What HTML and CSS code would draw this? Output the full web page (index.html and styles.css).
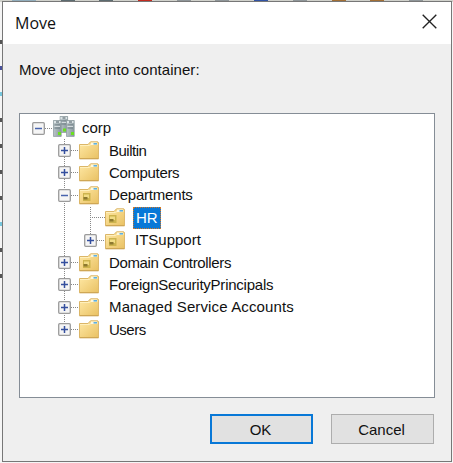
FILE: index.html
```html
<!DOCTYPE html>
<html lang="en">
<head>
<meta charset="utf-8">
<title>Move</title>
<link rel="stylesheet" href="styles.css">
</head>
<body>
<svg width="0" height="0" class="defs">
  <defs>
    <linearGradient id="gold" x1="0" y1="0" x2="1" y2="1"><stop offset="0" stop-color="#ffe9a6"/><stop offset="1" stop-color="#e9c163"/></linearGradient>
    <linearGradient id="steel" x1="0" y1="0" x2="1" y2="0"><stop offset="0" stop-color="#bac5c9"/><stop offset="1" stop-color="#87959b"/></linearGradient>
    <symbol id="folder" viewBox="0 0 20 19">
      <path d="M.5 3.5H9L11.5.8h7.3l.8 1V17.5H.5z" fill="url(#gold)" stroke="#dbb668"/>
      <path d="M1 4.5h9.5l2-1.5H19" fill="none" stroke="#fff0bd"/>
      <path d="M12 1.5h6v2.5h-6z" fill="#fff8de"/><path d="M14.5 2h3.5v1.6h-3.5z" fill="#5eb0df"/>
      <path d="M.5 17.8h19" stroke="#cba14d"/>
    </symbol>
    <symbol id="unit" viewBox="0 0 20 19">
      <use href="#folder" width="20" height="19"/>
      <path d="M4 7h7.5v8H4z" fill="#cdb44e"/>
      <path d="M5 8.5h5v3.5H5z" fill="#f1dc85"/><path d="M4.5 11h4v2.5h-4z" fill="#8d792f"/>
    </symbol>
    <symbol id="tower" viewBox="0 0 9 17">
      <path d="M.4.4h7.8v16H.4z" fill="url(#steel)" stroke="#8b999e" stroke-width=".8"/>
      <path d="M1 1h6.6v2.2H1z" fill="#dce4e6"/><path d="M3 2h3" stroke="#46565e"/><path d="M1.5 5h5.5M1.5 8h5.5" stroke="#6c7c83"/>
      <path d="M1.5 6.3h5.5" stroke="#e0e7e9"/>
    </symbol>
    <symbol id="domain" viewBox="0 0 22 22">
      <use href="#tower" x="6.5" y="0" width="9" height="17"/>
      <use href="#tower" x="0" y="4" width="9" height="17"/>
      <use href="#tower" x="13" y="4" width="9" height="17"/>
      <path d="M5 16h3v3H5zM10 12.5h3v3h-3zM18 16h3v3h-3z" fill="#6be01f"/>
    </symbol>
    <symbol id="plus" viewBox="0 0 13 13"><rect x=".7" y=".7" width="11.6" height="11.6" rx="1" fill="#f5f5f5" stroke="#9b9b9b" stroke-width="1.3"/><path d="M3 6.5h7M6.5 3v7" stroke="#344f9e" stroke-width="1.5"/></symbol>
    <symbol id="minus" viewBox="0 0 13 13"><rect x=".7" y=".7" width="11.6" height="11.6" rx="1" fill="#f5f5f5" stroke="#9b9b9b" stroke-width="1.3"/><path d="M3 6.5h7" stroke="#4864ae" stroke-width="1.5"/></symbol>
  </defs>
</svg>
<div class="desktop">
  <div class="backdrop">
    <i class="tool blue"></i><i class="tool dark"></i><i class="tool dark"></i><i class="tool red"></i><i class="tool gray"></i><i class="tool gray"></i><i class="tool navy"></i><i class="tool gray"></i><i class="tool brown"></i><i class="tool brown"></i><i class="tool gray"></i>
  </div>
  <div class="edge"><i></i><i class="navy"></i><i class="cyan"></i><i></i><i></i><i></i><i></i><i class="cyan"></i><i></i><i></i></div>
  <main class="dialog">
    <header><h1>Move</h1><svg class="close" viewBox="0 0 15 15"><path d="M.7.7l13.6 13.6M14.3.7L.7 14.3" stroke="#222" stroke-width="1.35"/></svg></header>
    <p class="prompt">Move object into container:</p>
    <div class="tree">
      <div class="row root"><svg class="toggle"><use href="#minus"/></svg><i class="dash"></i><svg class="server"><use href="#domain"/></svg><span class="corp">corp</span></div>
      <div class="children">
        <div class="row"><svg class="toggle"><use href="#plus"/></svg><i class="dash"></i><svg class="icon"><use href="#folder"/></svg><span class="builtin">Builtin</span></div>
        <div class="row"><svg class="toggle"><use href="#plus"/></svg><i class="dash"></i><svg class="icon"><use href="#folder"/></svg><span class="computers">Computers</span></div>
        <div class="row"><svg class="toggle"><use href="#minus"/></svg><i class="dash"></i><svg class="icon"><use href="#unit"/></svg><span class="departments">Departments</span></div>
        <div class="children nested">
          <div class="row"><i class="dash long"></i><svg class="icon"><use href="#unit"/></svg><span class="selected">HR</span></div>
          <div class="row"><svg class="toggle"><use href="#plus"/></svg><i class="dash"></i><svg class="icon"><use href="#unit"/></svg><span class="support">ITSupport</span></div>
        </div>
        <div class="row"><svg class="toggle"><use href="#plus"/></svg><i class="dash"></i><svg class="icon"><use href="#unit"/></svg><span class="controllers">Domain Controllers</span></div>
        <div class="row"><svg class="toggle"><use href="#plus"/></svg><i class="dash"></i><svg class="icon"><use href="#folder"/></svg><span class="foreign">ForeignSecurityPrincipals</span></div>
        <div class="row"><svg class="toggle"><use href="#plus"/></svg><i class="dash"></i><svg class="icon"><use href="#folder"/></svg><span class="managed">Managed Service Accounts</span></div>
        <div class="row"><svg class="toggle"><use href="#plus"/></svg><i class="dash"></i><svg class="icon"><use href="#folder"/></svg><span class="users">Users</span></div>
      </div>
    </div>
    <footer><button class="primary">OK</button><button>Cancel</button></footer>
  </main>
</div>
</body>
</html>
```

FILE: styles.css
```css
* { box-sizing: border-box; }
body { margin: 0; overflow: hidden; font-family: "Liberation Sans", sans-serif; font-size: 15px; color: #111; }
.defs { position: absolute; }
.desktop { position: relative; width: 453px; height: 463px; padding: 1px 1px 1px 2px; background: #f5f5f5; }
.backdrop { position: absolute; inset: 0 0 auto; height: 2px; display: flex; justify-content: space-between; padding: 0 30px 0 12px; background: #d0d1cb; }
.tool { width: 14px; height: 2px; background: #8f9699; }
.tool.blue { width: 24px; background: #91adbc; }
.tool.dark { background: #5c6b70; }
.tool.red { background: #c32b20; }
.tool.navy { background: #3153a4; }
.tool.brown { background: #a26f35; }
.edge { position: absolute; left: 0; top: 40px; display: grid; gap: 22px; }
.edge i { width: 2px; height: 4px; background: #555; }
.edge .navy { background: #49509a; }
.edge .cyan { background: #76c7dd; }
.dialog { position: relative; display: flex; flex-direction: column; width: 450px; height: 461px; border: 1px solid #777; background: #efefef; }
header { display: flex; align-items: flex-start; justify-content: space-between; height: 42px; padding: 12px 14px 0 12px; background: #fff; }
h1 { margin: -1px 0 0; font: 400 16px/20px "Open Sans", sans-serif; }
.close { width: 15px; height: 15px; }
.prompt { margin: 17px 0 0 16px; line-height: 18px; white-space: nowrap; letter-spacing: .05px; }
.tree { margin: 34px 0 0 16px; width: 416px; height: 285px; border: 1px solid #858d96; background: #fff; padding: 3px 0 0 12px; }
.row { display: flex; align-items: center; height: 22.4px; white-space: nowrap; }
.toggle { position: relative; z-index: 1; width: 13px; height: 13px; flex: none; }
.dash { width: 8px; height: 1px; flex: none; background: repeating-linear-gradient(90deg, #888 0 1px, transparent 1px 2px); }
.dash.long { width: 15px; margin-left: 6px; }
.icon { width: 20px; height: 19px; flex: none; }
.row span { margin-left: 10px; line-height: 20px; }
.server { width: 22px; height: 22px; flex: none; margin-top: -2px; }
.row .corp { margin-left: 7px; }
.builtin { letter-spacing: -.5px; }
.computers { letter-spacing: -.35px; }
.departments { letter-spacing: -.2px; }
.controllers { letter-spacing: -.35px; }
.foreign { letter-spacing: -.23px; }
.managed { letter-spacing: .13px; }
.users { letter-spacing: -.5px; }
.children { position: relative; padding-left: 26px; }
.children::before { content: ""; position: absolute; left: 32px; top: 0; bottom: 11px; width: 1px; background: repeating-linear-gradient(#888 0 1px, transparent 1px 2px); }
.row .selected { margin-left: 8px; padding: 0 2px; height: 22px; line-height: 20px; border: 1px dotted #d47825; background: #0878d7; color: #fff; }
footer { display: flex; gap: 18px; margin: 16px 0 0 207px; }
button { width: 103px; height: 30px; padding: 0 2px 0 0; border: 1px solid #adadad; background: #e1e1e1; color: #111; font: inherit; }
.primary { border: 2px solid #0878d7; }
```
